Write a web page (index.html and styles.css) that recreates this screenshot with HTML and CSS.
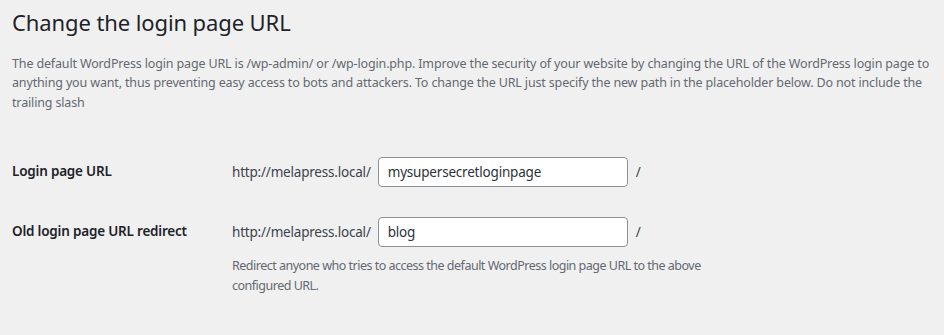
FILE: index.html
```html
<!DOCTYPE html>
<html>
<head>
<meta charset="utf-8">
<link rel="stylesheet" href="styles.css">
</head>
<body>
<div class="wrap">
  <h1 class="title">Change the login page URL</h1>
  <p class="intro">The default WordPress login page URL is /wp-admin/ or /wp-login.php. Improve the security of your website by changing the URL of the WordPress login page to anything you want, thus preventing easy access to bots and attackers. To change the URL just specify the new path in the placeholder below. Do not include the trailing slash</p>
  <table class="form-table">
    <tr>
      <th>Login page URL</th>
      <td>
        <div class="url-row">
          <span class="prefix">http://melapress.local/</span>
          <input class="text-input" type="text" value="mysupersecretloginpage">
          <span class="slash">/</span>
        </div>
      </td>
    </tr>
    <tr>
      <th>Old login page URL redirect</th>
      <td>
        <div class="url-row">
          <span class="prefix">http://melapress.local/</span>
          <input class="text-input" type="text" value="blog">
          <span class="slash">/</span>
        </div>
        <p class="description">Redirect anyone who tries to access the default WordPress login page URL to the above configured URL.</p>
      </td>
    </tr>
  </table>
</div>
</body>
</html>
```
FILE: styles.css
```css
html, body {
  margin: 0;
  padding: 0;
  background: #f0f0f1;
}
body {
  font-family: "Noto Sans", "Open Sans", sans-serif;
  color: #3c434a;
  font-size: 12.5px;
  letter-spacing: -0.2px;
}
.wrap {
  padding: 8px 12px 0 12px;
}
.title {
  margin: 0;
  font-size: 22px;
  font-weight: 400;
  line-height: 1.3;
  letter-spacing: -0.1px;
  color: #1d2327;
}
.intro {
  margin: 17px 0 0 0;
  font-size: 12.5px;
  line-height: 19.5px;
  letter-spacing: -0.15px;
  color: #646970;
}
.form-table {
  border-collapse: collapse;
  margin-top: 30px;
  width: 100%;
}
.form-table th {
  width: 200px;
  padding: 20px 10px 20px 0;
  text-align: left;
  vertical-align: top;
  font-size: 13.5px;
  font-weight: 600;
  line-height: 18px;
  color: #1d2327;
}
.form-table td {
  padding: 15px 10px;
  vertical-align: top;
}
.url-row {
  display: flex;
  align-items: center;
  font-size: 13.5px;
}
.prefix {
  color: #3c434a;
  margin-right: 7px;
}
.text-input {
  box-sizing: border-box;
  width: 250px;
  height: 30px;
  border: 1px solid #8c8f94;
  border-radius: 4px;
  background: #fff;
  padding: 0 9px;
  font-family: inherit;
  font-size: 13.5px;
  letter-spacing: -0.2px;
  color: #2c3338;
}
.slash {
  margin-left: 8px;
  color: #3c434a;
}
.description {
  margin: 9px 0 0 0;
  max-width: 480px;
  font-size: 12.5px;
  letter-spacing: -0.5px;
  line-height: 20px;
  color: #646970;
}
```
